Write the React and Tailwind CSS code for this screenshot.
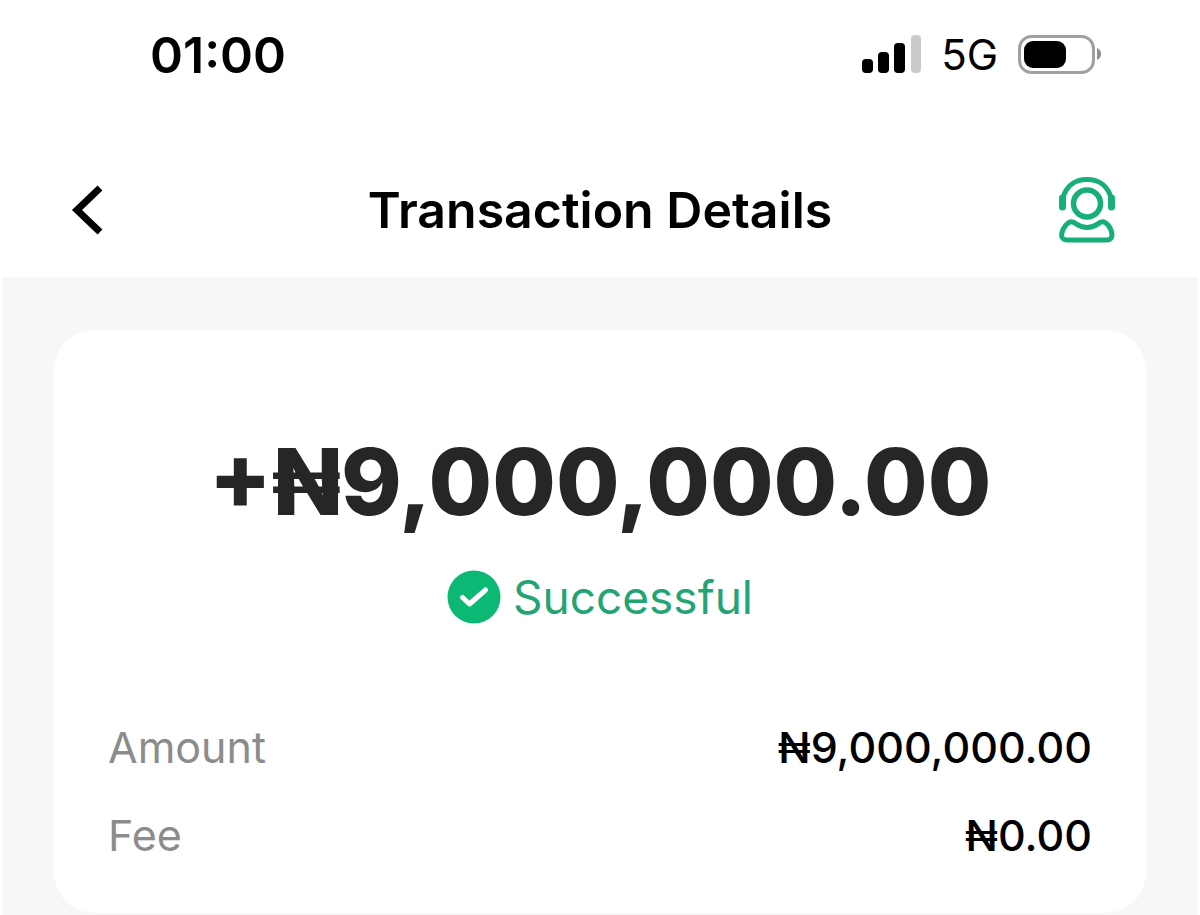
function SignalBars() {
  return (
    <svg width="60" height="40" viewBox="0 0 60 40" aria-hidden="true">
      <rect x="1" y="24" width="11" height="14" rx="4" fill="#000" />
      <rect x="17" y="17" width="11" height="21" rx="4" fill="#000" />
      <rect x="33" y="8" width="11" height="30" rx="4" fill="#000" />
      <rect x="50" y="0" width="10" height="38" rx="4" fill="#cacaca" />
    </svg>
  );
}

function Battery() {
  return (
    <svg width="84" height="40" viewBox="0 0 84 40" aria-hidden="true">
      <rect x="1.5" y="1.5" width="74" height="36" rx="12" fill="#fff" stroke="#a0a0a0" strokeWidth="3" />
      <rect x="6" y="6" width="42" height="27" rx="9" fill="#000" />
      <path d="M79 13 C84.500 15 84.500 23 79 25 Z" fill="#8f8f8f" />
    </svg>
  );
}

function BackIcon() {
  return (
    <svg width="34" height="52" viewBox="0 0 34 52" fill="none" aria-hidden="true">
      <path d="M30 4 L7 26 L30 48" stroke="#000" strokeWidth="7" />
    </svg>
  );
}

function SupportIcon() {
  return (
    <svg width="58" height="68" viewBox="0 0 58 68" fill="none" stroke="#16b076" aria-hidden="true">
      <path d="M5 22 C8 10 17 3.500 29 3.500 C41 3.500 50 10 53 22" strokeWidth="5" />
      <path d="M4.500 22 V31 M53.500 22 V31" strokeWidth="7" strokeLinecap="round" />
      <circle cx="29" cy="27.500" r="13.500" strokeWidth="5.500" />
      <path
        d="M15 46 C19 48 21 51.500 29 51.500 C37 51.500 39 48 43 46 C48 44 54 53 54 59 C54 62 52 64 49 64 H9 C6 64 3.500 62 3.500 59 C4 53 10 44 15 46 Z"
        strokeWidth="5"
        strokeLinejoin="round"
      />
    </svg>
  );
}

function SuccessIcon() {
  return (
    <svg width="54" height="54" viewBox="0 0 54 54" fill="none" aria-hidden="true">
      <circle cx="27" cy="27" r="26.500" fill="#0bb974" />
      <path d="M15.500 27.500 L22.500 34 L38.500 20" stroke="#fff" strokeWidth="5" strokeLinecap="round" strokeLinejoin="round" />
    </svg>
  );
}

const rows = [
  { label: "Amount", value: "₦9,000,000.00" },
  { label: "Fee", value: "₦0.00" },
];

export default function App() {
  return (
    <div className="min-h-screen bg-white font-['Inter',sans-serif] text-black">
      <div className="flex h-[110px] items-center justify-between pr-[98px] pl-[150px]">
        <span className="text-[50px] leading-none font-semibold">01:00</span>
        <div className="flex items-center gap-5">
          <SignalBars />
          <span className="text-[42px] leading-none">5G</span>
          <Battery />
        </div>
      </div>

      <header className="grid h-[167px] grid-cols-[1fr_auto_1fr] items-center px-[70px] pt-8">
        <button type="button" aria-label="Back" className="justify-self-start">
          <BackIcon />
        </button>
        <h1 className="text-[50px] leading-none font-semibold">Transaction Details</h1>
        <button type="button" aria-label="Support" className="mr-[14px] justify-self-end">
          <SupportIcon />
        </button>
      </header>

      <main className="mx-[2px] bg-[#f7f7fa] px-[52px] pt-[53px] pb-[2px]">
        <section className="rounded-[40px] bg-white px-[54px] pt-[100px] pb-[52px]">
          <p className="text-center text-[92px] leading-[104px] font-extrabold whitespace-nowrap text-[#262626]">
            +₦9,000,000.00
          </p>
          <div className="mt-[34px] flex items-center justify-center gap-3 text-[#23a475]">
            <SuccessIcon />
            <span className="text-[46px] leading-[58px]">Successful</span>
          </div>
          <dl className="mt-[95px] flex flex-col gap-9">
            {rows.map((row) => (
              <div key={row.label} className="flex items-center justify-between text-[43px] leading-[52px]">
                <dt className="text-[#8c8c8c]">{row.label}</dt>
                <dd className="font-medium">{row.value}</dd>
              </div>
            ))}
          </dl>
        </section>
      </main>
    </div>
  );
}
